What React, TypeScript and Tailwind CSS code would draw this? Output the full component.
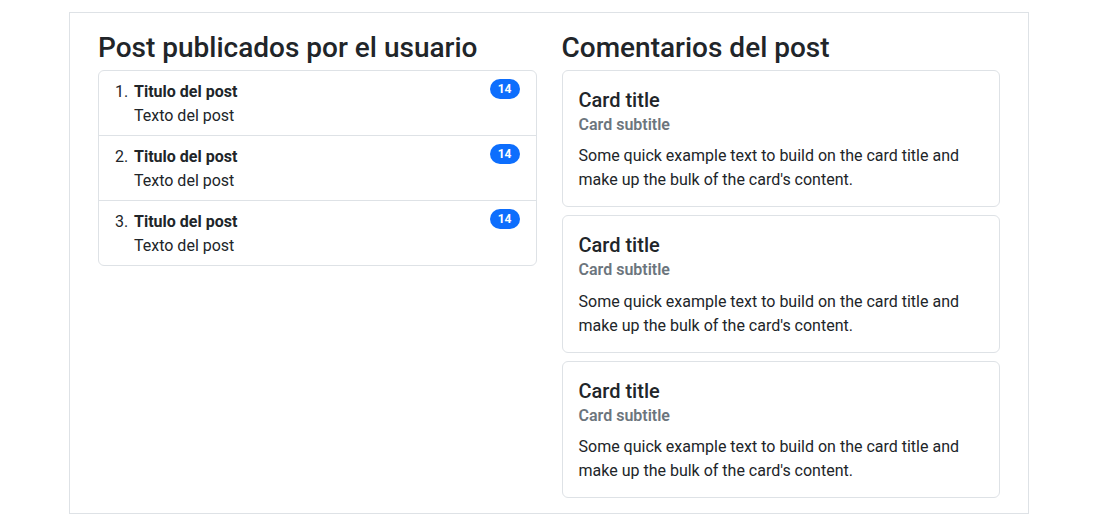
const posts = [1, 2, 3]
const comments = [1, 2, 3]

function PostItem({ n }: { n: number }) {
  return (
    <li className="flex items-start justify-between border-b border-[#dee2e6] px-4 pb-[7px] pt-[9px] last:border-b-0">
      <div className="flex">
        <span className="w-[19px] shrink-0">{n}.</span>
        <div>
          <div className="font-bold">Titulo del post</div>
          <div>Texto del post</div>
        </div>
      </div>
      <span className="-mt-px rounded-full bg-[#0d6efd] px-[8px] py-[4px] text-[12px] font-bold leading-[12px] text-white">
        14
      </span>
    </li>
  )
}

function CommentCard() {
  return (
    <div className="rounded-[6px] border border-[#dee2e6] px-4 pb-[14px] pt-[17px]">
      <h5 className="mb-[7px] text-[20px] font-medium leading-[24px]">Card title</h5>
      <h6 className="-mt-1 mb-[10px] text-[16px] font-semibold leading-[19.3px] text-[#6c757d]">Card subtitle</h6>
      <p className="leading-[24px]">
        Some quick example text to build on the card title and make up the bulk of the card's content.
      </p>
    </div>
  )
}

export default function App() {
  return (
    <div className="min-h-[515px] bg-white font-['Roboto','Noto_Sans',sans-serif] text-[16px] leading-[24px] text-[#212529]">
      <div className="ml-[69px] mt-3 w-[960px] border border-[#dee2e6] px-[28px] pb-[15px] pt-[18px]">
        <div className="grid grid-cols-2 gap-[25px]">
          <section>
            <h3 className="mb-[5px] text-[28px] font-medium leading-[34px]">Post publicados por el usuario</h3>
            <ol className="rounded-[6px] border border-[#dee2e6]">
              {posts.map((n) => (
                <PostItem key={n} n={n} />
              ))}
            </ol>
          </section>
          <section>
            <h3 className="mb-[5px] text-[28px] font-medium leading-[34px]">Comentarios del post</h3>
            <div className="flex flex-col gap-2">
              {comments.map((c) => (
                <CommentCard key={c} />
              ))}
            </div>
          </section>
        </div>
      </div>
    </div>
  )
}
